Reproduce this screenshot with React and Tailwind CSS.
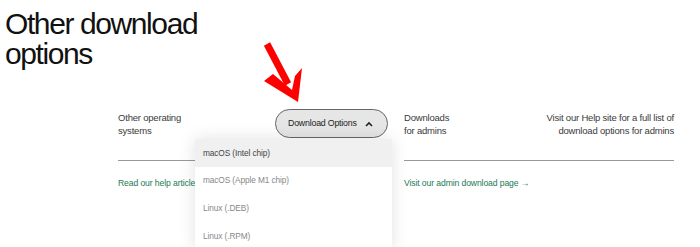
import React from "react";

export default function App() {
  const sans = { fontFamily: '"Liberation Sans", Arial, sans-serif' };
  return (
    <div className="relative w-[700px] h-[247px] bg-white overflow-hidden text-[#3a3a3a]" style={sans}>
      <h1 className="pl-[5px] pt-[9px] text-[30px] leading-[30px] tracking-[-1.4px] text-[#111] font-normal">
        Other download
        <br />
        options
      </h1>

      {/* red arrow annotation */}
      <svg className="absolute left-[258px] top-[40px]" width="50" height="66" viewBox="0 0 50 66">
        <path d="M9 4 L30 44" stroke="#ff0000" strokeWidth="7" strokeLinecap="butt" />
        <path d="M6 41 L40 62 L44 28 L37 36 L34 50 L15 34 Z" fill="#ff0000" />
      </svg>

      <div className="mt-[44px] ml-[118px] w-[556px] grid grid-cols-2 gap-[16px]">
        <div className="flex flex-col">
          <div className="flex items-start justify-between h-[47px]">
            <div className="mt-[-2px] text-[9.5px] leading-[13px] tracking-[-0.2px]">
              Other operating
              <br />
              systems
            </div>
            <button className="mt-[-4px] h-[29px] w-[113px] rounded-full border border-[#666] bg-[#e6e6e6] flex items-center pl-[12px] gap-[8px] text-[8.8px] tracking-[-0.2px] text-[#222] whitespace-nowrap">
              <span>Download Options</span>
              <svg width="8" height="6" viewBox="0 0 8 6">
                <path d="M1 5 L4 2 L7 5" stroke="#222" strokeWidth="1.6" fill="none" />
              </svg>
            </button>
          </div>
          <div className="h-px bg-[#999]" />
          <div className="mt-[16px] text-[8.6px] tracking-[-0.1px] text-[#1a7a55] whitespace-nowrap">Read our help article →</div>
        </div>
        <div className="flex flex-col">
          <div className="mt-[-2px] flex items-start justify-between h-[49px] text-[9.5px] leading-[13px] tracking-[-0.2px]">
            <div>
              Downloads
              <br />
              for admins
            </div>
            <div className="text-right">
              Visit our Help site for a full list of
              <br />
              download options for admins
            </div>
          </div>
          <div className="h-px bg-[#999]" />
          <div className="mt-[16px] text-[8.6px] tracking-[-0.1px] text-[#1a7a55]">Visit our admin download page →</div>
        </div>
      </div>

      {/* dropdown menu */}
      <div className="absolute left-[195px] top-[139px] w-[197px] bg-white shadow-[0_0_16px_rgba(0,0,0,0.12)] text-[8.3px] tracking-[-0.1px]">
        <div className="h-[28px] bg-[#f0f0f0] flex items-center pl-[8px] text-[#444]">macOS (Intel chip)</div>
        <div className="h-[27px] flex items-center pl-[8px] text-[#888]">macOS (Apple M1 chip)</div>
        <div className="h-[28px] flex items-center pl-[8px] text-[#888]">Linux (.DEB)</div>
        <div className="h-[28px] flex items-center pl-[8px] text-[#888]">Linux (.RPM)</div>
      </div>
    </div>
  );
}
